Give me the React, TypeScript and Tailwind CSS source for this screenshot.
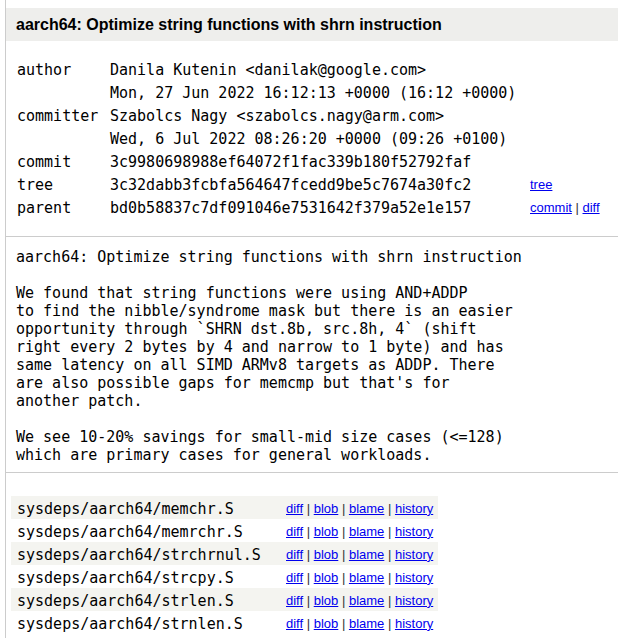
import React from "react";

const mono = "font-['DejaVu_Sans_Mono',monospace] text-[15px]";
const sans = "font-['Liberation_Sans',Arial,sans-serif]";

const meta = [
  { label: "author", value: "Danila Kutenin <danilak@google.com>", links: [] as string[] },
  { label: "", value: "Mon, 27 Jun 2022 16:12:13 +0000 (16:12 +0000)", links: [] },
  { label: "committer", value: "Szabolcs Nagy <szabolcs.nagy@arm.com>", links: [] },
  { label: "", value: "Wed, 6 Jul 2022 08:26:20 +0000 (09:26 +0100)", links: [] },
  { label: "commit", value: "3c9980698988ef64072f1fac339b180f52792faf", links: [] },
  { label: "tree", value: "3c32dabb3fcbfa564647fcedd9be5c7674a30fc2", links: ["tree"] },
  { label: "parent", value: "bd0b58837c7df091046e7531642f379a52e1e157", links: ["commit", "diff"] },
];

const message = `aarch64: Optimize string functions with shrn instruction

We found that string functions were using AND+ADDP
to find the nibble/syndrome mask but there is an easier
opportunity through \`SHRN dst.8b, src.8h, 4\` (shift
right every 2 bytes by 4 and narrow to 1 byte) and has
same latency on all SIMD ARMv8 targets as ADDP. There
are also possible gaps for memcmp but that's for
another patch.

We see 10-20% savings for small-mid size cases (<=128)
which are primary cases for general workloads.`;

const files = [
  "sysdeps/aarch64/memchr.S",
  "sysdeps/aarch64/memrchr.S",
  "sysdeps/aarch64/strchrnul.S",
  "sysdeps/aarch64/strcpy.S",
  "sysdeps/aarch64/strlen.S",
  "sysdeps/aarch64/strnlen.S",
];

const Links = ({ items, className = "" }: { items: string[]; className?: string }) => (
  <span className={`${sans} text-[13px] text-[#333] ${className}`}>
    {items.map((l, i) => (
      <React.Fragment key={l}>
        {i > 0 && " | "}
        <a href="#" className="text-[#0000ee] underline">
          {l}
        </a>
      </React.Fragment>
    ))}
  </span>
);

export default function App() {
  return (
    <div className="w-full min-h-screen bg-white text-black">
      <div className="ml-[5px] border-l border-l-[#cccccc] min-h-[638px] pt-[8px]">
        {/* header */}
        <div className={`${sans} h-[33px] bg-[#eeeeec] flex items-center pl-[10px] text-[16px] font-bold`}>
          aarch64: Optimize string functions with shrn instruction
        </div>

        {/* commit info */}
        <div className="pl-[11px] pt-[17px] pb-[17px] border-b border-b-[#cccccc]">
          {meta.map((row, i) => (
            <div key={i} className={`${mono} h-[23px] pt-[2px] flex items-center`}>
              <span className="w-[93px] shrink-0">{row.label}</span>
              <span className="w-[420px] shrink-0 whitespace-pre">{row.value}</span>
              {row.links.length > 0 && <Links items={row.links} className="pb-[2px]" />}
            </div>
          ))}
        </div>

        {/* commit message */}
        <div className="pl-[10px] pt-[11px] pb-[8px] border-b border-b-[#cccccc]">
          <pre className={`${mono} leading-[18px] whitespace-pre`}>{message}</pre>
        </div>

        {/* diffstat */}
        <div className="pl-[5px] pt-[23px]">
          <div className="w-[427px]">
            {files.map((f, i) => (
              <div
                key={f}
                className={`h-[23px] pt-[4px] flex items-center pl-[6px] ${i % 2 === 0 ? "bg-[#f4f4f0]" : "bg-white"}`}
              >
                <span className={`${mono} w-[269px] shrink-0`}>{f}</span>
                <Links items={["diff", "blob", "blame", "history"]} className="pb-[2px]" />
              </div>
            ))}
          </div>
        </div>
      </div>
    </div>
  );
}
